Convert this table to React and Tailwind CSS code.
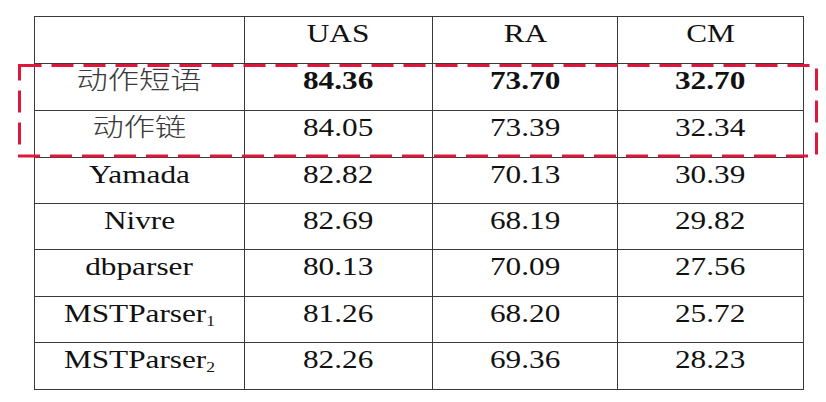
const rows = [
  { name: "动作短语", cjk: true, uas: "84.36", ra: "73.70", cm: "32.70", bold: true },
  { name: "动作链", cjk: true, uas: "84.05", ra: "73.39", cm: "32.34" },
  { name: "Yamada", uas: "82.82", ra: "70.13", cm: "30.39" },
  { name: "Nivre", uas: "82.69", ra: "68.19", cm: "29.82" },
  { name: "dbparser", uas: "80.13", ra: "70.09", cm: "27.56" },
  { name: "MSTParser", sub: "1", uas: "81.26", ra: "68.20", cm: "25.72" },
  { name: "MSTParser", sub: "2", uas: "82.26", ra: "69.36", cm: "28.23" },
];

const heights = ["h-[47px]", "h-[47px]", "h-[47px]", "h-[46px]", "h-[46px]", "h-[47px]", "h-[46px]", "h-[47px]"];

// text in the shot is stretched sideways, so widen each label
const Cell = ({ children, bold, cjk, h }) => (
  <div className={`${h} flex justify-center border-r border-b border-[#3a3a3a] pt-[4px]`}>
    <span
      className={`inline-block h-[25px] scale-x-[1.25] text-[25px] leading-[25px] ${
        cjk
          ? "font-['Liberation_Serif','Noto_Sans_CJK_SC',serif] font-light text-[#3a3a3a]"
          : `font-['Liberation_Serif',serif] text-[#111] ${bold ? "font-bold" : "font-normal"}`
      }`}
    >
      {children}
    </span>
  </div>
);

const App = () => {
  return (
    <div className="relative h-[402px] w-[826px] overflow-hidden bg-white font-['Liberation_Serif',serif]">
      <div className="pl-[34px] pt-[16px]">
        <div className="grid w-[770px] grid-cols-[210px_188px_185px_186px] border-l border-t border-[#3a3a3a]">
          <Cell h={heights[0]}>{""}</Cell>
          <Cell h={heights[0]}>UAS</Cell>
          <Cell h={heights[0]}>RA</Cell>
          <Cell h={heights[0]}>CM</Cell>
          {rows.map((r, i) => [
            <Cell key={`n${i}`} h={heights[i + 1]} cjk={r.cjk}>
              {r.name}
              {r.sub && (
                <span className="relative top-[4px] text-[14px] leading-none">{r.sub}</span>
              )}
            </Cell>,
            <Cell key={`u${i}`} h={heights[i + 1]} bold={r.bold}>{r.uas}</Cell>,
            <Cell key={`r${i}`} h={heights[i + 1]} bold={r.bold}>{r.ra}</Cell>,
            <Cell key={`c${i}`} h={heights[i + 1]} bold={r.bold}>{r.cm}</Cell>,
          ])}
        </div>
      </div>

      {/* red dashed highlight over the first two rows */}
      <svg
        className="pointer-events-none absolute left-[18px] top-[64px]"
        width="800"
        height="94"
        viewBox="0 0 800 94"
      >
        <rect
          x="1.5"
          y="1.5"
          width="797"
          height="90.5"
          fill="none"
          stroke="#e0173d"
          strokeWidth="3"
          strokeDasharray="22 10"
        />
      </svg>
    </div>
  );
};

export default App;
